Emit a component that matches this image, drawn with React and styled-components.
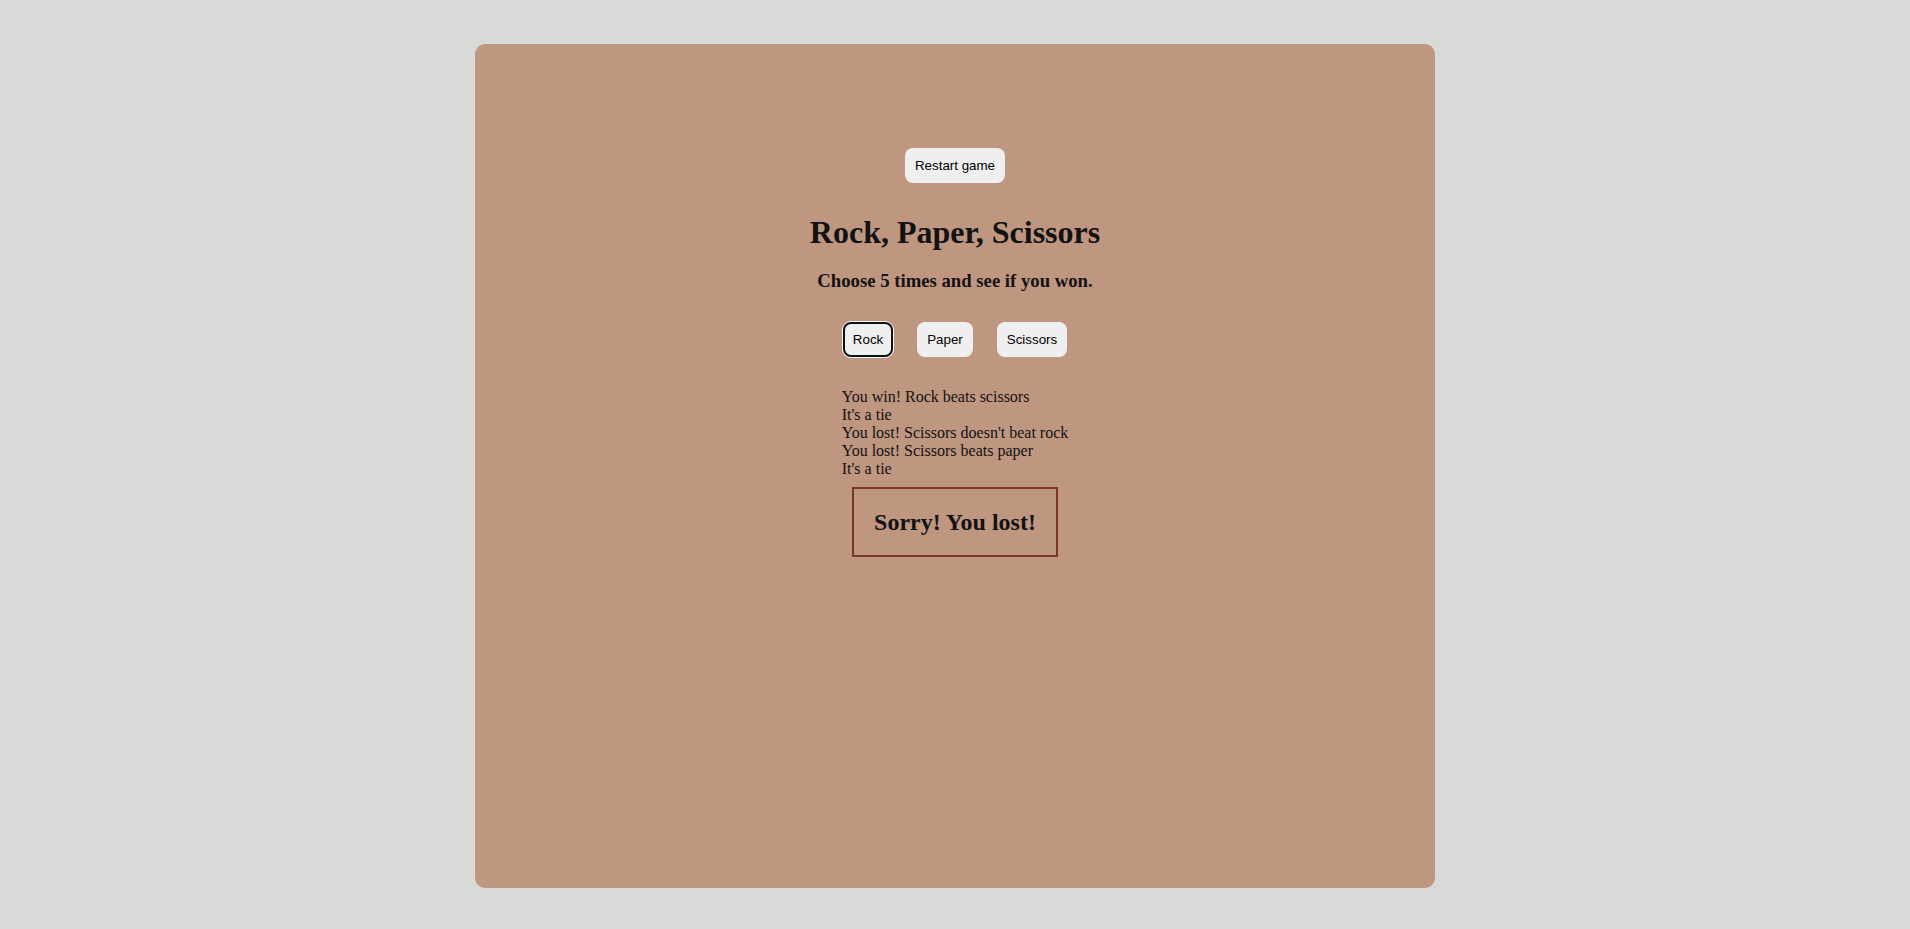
import React from "react";
import styled, { createGlobalStyle } from "styled-components";

const GlobalStyle = createGlobalStyle`
  body {
    margin: 0;
    background: #d8dad7;
    font-family: "Liberation Serif", "Times New Roman", serif;
    color: #121212;
  }
`;

const rounds = [
  "You win! Rock beats scissors",
  "It's a tie",
  "You lost! Scissors doesn't beat rock",
  "You lost! Scissors beats paper",
  "It's a tie",
];

function App() {
  return (
    <>
      <GlobalStyle />
      <Card>
        <Button>Restart game</Button>
        <Title>Rock, Paper, Scissors</Title>
        <Subtitle>Choose 5 times and see if you won.</Subtitle>
        <Choices>
          <Button focused>Rock</Button>
          <Button>Paper</Button>
          <Button>Scissors</Button>
        </Choices>
        <Results>
          {rounds.map((r, i) => (
            <div key={i}>{r}</div>
          ))}
        </Results>
        <Verdict>
          <h2>Sorry! You lost!</h2>
        </Verdict>
      </Card>
    </>
  );
}

export default App;

const Card = styled.main`
  width: 960px;
  height: 844px;
  margin: 44px auto 0;
  padding-top: 104px;
  box-sizing: border-box;
  background: #bf9680;
  border-radius: 10px;
  display: flex;
  flex-direction: column;
  align-items: center;
`;

const Button = styled.button`
  font-family: "Liberation Sans", Arial, sans-serif;
  font-size: 13.333px;
  line-height: 15px;
  color: #000;
  background: #efefef;
  border: none;
  border-radius: 8px;
  padding: 10px;
  cursor: pointer;
  box-shadow: ${props => (props.focused ? "inset 0 0 0 2px #101010, 0 0 0 1px #fff" : "none")};
`;

const Title = styled.h1`
  margin: 31px 0 0;
  font-size: 32px;
  line-height: 37px;
  font-weight: bold;
`;

const Subtitle = styled.h3`
  margin: 19px 0 0;
  font-size: 18.72px;
  line-height: 21.5px;
  font-weight: bold;
`;

const Choices = styled.div`
  display: flex;
  gap: 24px;
  margin-top: 30px;
`;

const Results = styled.div`
  margin-top: 31px;
  text-align: left;
  font-size: 16px;
  line-height: normal;
`;

const Verdict = styled.div`
  margin-top: 9px;
  border: 2px solid #78372a;
  padding: 19px 20px;

  h2 {
    margin: 0;
    font-size: 24px;
    line-height: 28px;
    font-weight: bold;
  }
`;
